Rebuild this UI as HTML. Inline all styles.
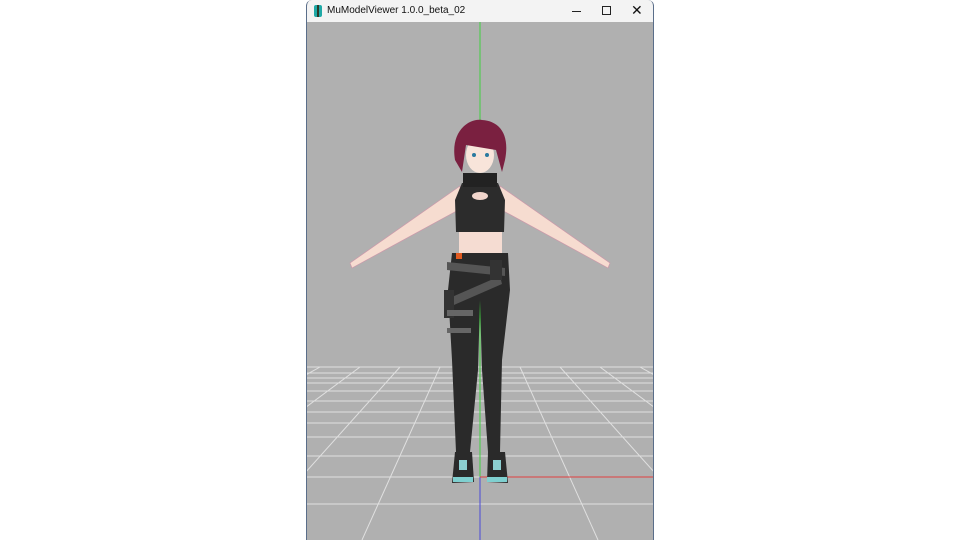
<!DOCTYPE html>
<html><head><meta charset="utf-8"><style>
body{margin:0;background:#fff;width:960px;height:540px;overflow:hidden;font-family:"Liberation Sans",sans-serif}
.win{position:absolute;left:306px;top:0;width:348px;height:540px;background:#b0b0b0;border-left:1px solid #5a6e8a;border-right:1px solid #5a6e8a;box-sizing:border-box;border-radius:6px 6px 0 0;overflow:hidden}
.tb{position:absolute;left:0;top:0;width:100%;height:22px;background:#f3f3f3;font-size:10px;color:#111}
</style></head><body>
<div class="win">
<div class="tb">
<div style="position:absolute;left:7px;top:5px;width:8px;height:12px;background:#1fa9a6;border-radius:2px"></div>
<div style="position:absolute;left:10px;top:5px;width:2px;height:12px;background:#2a3a2a"></div>
<div style="position:absolute;left:20px;top:5px">MuModelViewer 1.0.0_beta_02</div>
<div style="position:absolute;left:265px;top:11px;width:9px;height:1px;background:#222"></div>
<div style="position:absolute;left:295px;top:6px;width:7px;height:7px;border:1px solid #222"></div>
<div style="position:absolute;left:324px;top:2px;font-size:14px">✕</div>
</div>
<svg width="348" height="518" style="position:absolute;left:-1px;top:22px" viewBox="306 22 348 518">
<rect x="306" y="22" width="348" height="518" fill="#b0b0b0"/>
<g stroke="#e0e0e0" stroke-width="1">
<line x1="306" y1="367" x2="654" y2="367"/><line x1="306" y1="373" x2="654" y2="373"/>
<line x1="306" y1="378" x2="654" y2="378"/><line x1="306" y1="383" x2="654" y2="383"/>
<line x1="306" y1="391" x2="654" y2="391"/><line x1="306" y1="401" x2="654" y2="401"/>
<line x1="306" y1="412" x2="654" y2="412"/><line x1="306" y1="423" x2="654" y2="423"/>
<line x1="306" y1="437" x2="654" y2="437"/><line x1="306" y1="456" x2="654" y2="456"/>
<line x1="306" y1="477" x2="654" y2="477"/><line x1="306" y1="504" x2="654" y2="504"/>
<line x1="440" y1="367" x2="362" y2="540"/><line x1="400" y1="367" x2="245" y2="540"/>
<line x1="360" y1="367" x2="127" y2="540"/><line x1="320" y1="367" x2="10" y2="540"/>
<line x1="520" y1="367" x2="598" y2="540"/><line x1="560" y1="367" x2="715" y2="540"/>
<line x1="600" y1="367" x2="833" y2="540"/><line x1="640" y1="367" x2="950" y2="540"/>
</g>
<line x1="480" y1="22" x2="480" y2="477" stroke="#3fd03f"/>
<line x1="480" y1="477" x2="480" y2="540" stroke="#4a4ad8"/>
<line x1="480" y1="477" x2="654" y2="477" stroke="#e04040"/>
<!-- arms -->
<path d="M460 186 L350 263 L352 268 L462 208 Z" fill="#f6dcd0" stroke="#c9a" stroke-width="0.7"/>
<path d="M500 186 L610 263 L608 268 L498 208 Z" fill="#f6dcd0" stroke="#c9a" stroke-width="0.7"/>
<!-- midriff -->
<rect x="459" y="228" width="43" height="28" fill="#f5dcd2"/>
<!-- top -->
<path d="M462 183 L498 183 L505 200 L504 232 L456 232 L455 200 Z" fill="#2c2c2c"/>
<rect x="463" y="173" width="34" height="14" fill="#222"/>
<ellipse cx="480" cy="196" rx="8" ry="4" fill="#f2d6cc"/>
<!-- face -->
<ellipse cx="480" cy="155" rx="14" ry="18" fill="#f8e4da"/>
<path d="M455 160 C450 130 470 118 482 120 C500 121 510 135 505 160 L502 172 L496 150 L466 145 L462 172 Z" fill="#7a2040"/>
<circle cx="474" cy="155" r="2" fill="#2a7aa0"/><circle cx="487" cy="155" r="2" fill="#2a7aa0"/>
<!-- pants -->
<path d="M452 253 L508 253 L510 290 L502 360 L500 452 L488 452 L482 370 L480 300 L478 370 L470 452 L456 452 L452 360 L448 290 Z" fill="#2a2a2a"/>
<path d="M447 262 L505 268 L505 276 L447 270 Z" fill="#555"/>
<path d="M445 300 L500 276 L502 284 L447 308 Z" fill="#555"/>
<rect x="444" y="290" width="10" height="28" fill="#333"/>
<rect x="447" y="310" width="26" height="6" fill="#666"/>
<rect x="447" y="328" width="24" height="5" fill="#666"/>
<rect x="456" y="253" width="6" height="6" fill="#e05a20"/>
<rect x="490" y="260" width="12" height="20" fill="#333"/>
<!-- shoes -->
<path d="M455 452 L472 452 L474 482 L452 483 Z" fill="#2a2a2a"/>
<path d="M488 452 L505 452 L508 483 L487 482 Z" fill="#2a2a2a"/>
<rect x="453" y="477" width="20" height="5" fill="#7fd0d0"/>
<rect x="487" y="477" width="20" height="5" fill="#7fd0d0"/>
<rect x="459" y="460" width="8" height="10" fill="#8ccfd0"/>
<rect x="493" y="460" width="8" height="10" fill="#8ccfd0"/>
</svg>
</div>
</body></html>
